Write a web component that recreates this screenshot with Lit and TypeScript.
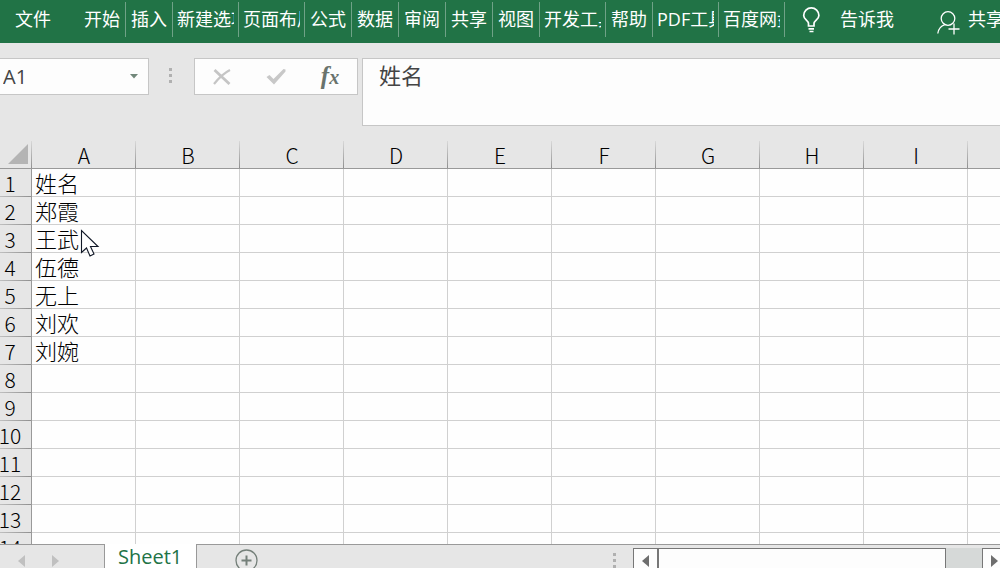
import { LitElement, html, css, svg } from "lit";
import { customElement, property, state } from "lit/decorators.js";
import { classMap } from "lit/directives/class-map.js";

interface RibbonTab {
  label: string;
  wide?: boolean;
}

const TABS: RibbonTab[] = [
  { label: "开始" },
  { label: "插入" },
  { label: "新建选项卡", wide: true },
  { label: "页面布局", wide: true },
  { label: "公式" },
  { label: "数据" },
  { label: "审阅" },
  { label: "共享" },
  { label: "视图" },
  { label: "开发工具", wide: true },
  { label: "帮助" },
  { label: "PDF工具集", wide: true },
  { label: "百度网盘", wide: true },
];

const COLUMNS = ["A", "B", "C", "D", "E", "F", "G", "H", "I", "J"];
const NAMES = ["姓名", "郑霞", "王武", "伍德", "无上", "刘欢", "刘婉"];
const ROW_COUNT = 14;

const reset = css`
  :host,
  * {
    box-sizing: border-box;
  }
  button,
  input,
  textarea {
    margin: 0;
    padding: 0;
    border: 0;
    border-radius: 0;
    background: none;
    color: inherit;
    font: inherit;
    outline: none;
  }
  svg {
    display: block;
    flex: none;
  }
`;

@customElement("ribbon-bar")
class RibbonBar extends LitElement {
  static styles = [
    reset,
    css`
      :host {
        display: flex;
        flex: none;
        height: 43px;
        padding: 2px 0 6px;
        overflow: hidden;
        background: #217346;
        color: #fff;
        font-size: 18px;
        line-height: 35px;
      }
      .tabs {
        display: flex;
        flex: none;
        margin-left: 13px;
      }
      .tab {
        width: 47px;
        padding: 0 4px;
        border-right: 1px solid #6fa287;
        white-space: nowrap;
      }
      .tab.wide {
        width: 66px;
        text-align: left;
      }
      .clip {
        display: block;
        overflow: hidden;
      }
      .file {
        flex: none;
        width: 66px;
      }
      .action {
        display: flex;
        flex: none;
        align-items: center;
        white-space: nowrap;
      }
      .tell {
        gap: 18px;
        margin-left: 17px;
      }
      .share {
        gap: 8px;
        margin: 0 -4px 0 auto;
      }
      .person {
        margin-top: 6px;
      }
    `,
  ];

  render() {
    return html`
      <button class="file">文件</button>
      <nav class="tabs">
        ${TABS.map(
          (t) => html`<button class=${classMap({ tab: true, wide: !!t.wide })}>
            <span class="clip">${t.label}</span>
          </button>`
        )}
      </nav>
      <button class="action tell">
        <svg width="20" height="26" viewBox="0 0 20 26" fill="none" stroke="#fff" stroke-width="1.7">
          <path d="M6.500 19v-2.5C6.500 13.500 1.700 12.500 1.700 8.500a7.500 7.500 0 0 1 15.200 0C16.900 12.500 12 13.500 12 16.500V19z" />
          <path d="M6.500 21.800h5.500M7.500 24.500h4" />
        </svg>
        告诉我
      </button>
      <button class="action share">
        <svg class="person" width="23" height="24" viewBox="0 0 23 24" fill="none" stroke="#fff" stroke-width="1.300">
          <circle cx="11" cy="7.500" r="6.800" />
          <path d="M.8 22.500c.6-4.500 3.200-7.500 7-8.800M17 12.500v11M11.500 18h11" />
        </svg>
        共享
      </button>
    `;
  }
}

@customElement("formula-bar")
class FormulaBar extends LitElement {
  @property() cell = "";
  @property() value = "";

  static styles = [
    reset,
    css`
      :host {
        display: flex;
        flex: none;
        align-items: flex-start;
        padding: 15px 0;
        color: #444;
        font-size: 20px;
      }
      .box {
        display: flex;
        flex: none;
        align-items: center;
        height: 37px;
        border: 1px solid #c6c6c6;
        background: #fdfdfd;
      }
      .name {
        width: 149px;
        padding: 0 10px 0 3px;
        border-left: 0;
      }
      .name input {
        flex: 1;
        min-width: 0;
      }
      .grip {
        margin: 10px 21px 0 20px;
      }
      .tools {
        width: 164px;
        margin-right: 4px;
      }
      .tools button {
        display: flex;
        flex: 1;
        align-items: center;
        justify-content: center;
        height: 35px;
      }
      .fx {
        color: #69736d;
        font: italic bold 25px/32px "Liberation Serif", serif;
      }
      .sub {
        font-size: 20px;
      }
      .value {
        flex: 1;
        min-width: 0;
        height: 68px;
        padding: 0 16px;
        border: 1px solid #c6c6c6;
        border-right: 0;
        background: #fdfdfd;
        font-size: 22px;
        line-height: 32px;
        resize: none;
      }
    `,
  ];

  render() {
    return html`
      <div class="box name">
        <input aria-label="名称框" .value=${this.cell} />
        <button aria-label="名称列表">
          <svg width="8" height="5" viewBox="0 0 8 5"><path d="M0 0h8L4 4.500z" fill="#71877a" /></svg>
        </button>
      </div>
      <svg class="grip" width="4" height="16" viewBox="0 0 4 16">
        <path d="M0 0h3v3H0zM0 6h3v3H0zM0 12h3v3H0z" fill="#b0b0b0" />
      </svg>
      <div class="box tools">
        <button aria-label="取消">
          <svg width="18" height="16" viewBox="0 0 18 16" fill="none" stroke="#c5c5c5">
            <path d="M1.500 1 16.500 15" stroke-width="2.800" />
            <path d="M17 1C11 4 5 10 1 15" stroke-width="2.200" />
          </svg>
        </button>
        <button aria-label="输入">
          <svg width="20" height="17" viewBox="0 0 20 17">
            <path d="M.5 9 3.500 7l4 4L17.500 1l2 .5v2L8 16.500z" fill="#c8c8c8" />
          </svg>
        </button>
        <button aria-label="插入函数"><span class="fx">f<span class="sub">x</span></span></button>
      </div>
      <textarea class="value" aria-label="编辑栏" .value=${this.value}></textarea>
    `;
  }
}

@customElement("sheet-grid")
class SheetGrid extends LitElement {
  static styles = [
    reset,
    css`
      :host {
        display: block;
        position: relative;
        flex: 1;
        min-height: 0;
        overflow: hidden;
        background: linear-gradient(#e6e6e6 28px, #fff 28px);
        color: #000;
        font-family: "Noto Sans CJK SC", sans-serif;
        font-size: 22px;
        font-weight: 300;
        line-height: 27px;
      }
      table {
        width: 1083px;
        margin-left: -11px;
        border-collapse: separate;
        border-spacing: 0;
        table-layout: fixed;
      }
      .index {
        width: 43px;
      }
      th,
      td {
        height: 28px;
        padding: 0;
        font-weight: inherit;
        white-space: nowrap;
      }
      th {
        font-size: 21px;
      }
      td {
        padding-left: 3px;
        border-right: 1px solid #d0d0d0;
        border-bottom: 1px solid #d0d0d0;
        background: #fefefe;
      }
      .head {
        padding-top: 2px;
        border-bottom: 1px solid #999;
        background: linear-gradient(#d8d8d8, #909090) right / 1px 100% no-repeat #e6e6e6;
        line-height: 25px;
      }
      .row {
        border-right: 1px solid #999;
        background: linear-gradient(90deg, #d0d0d0, #909090) bottom / 100% 1px no-repeat #e6e6e6;
        line-height: 28px;
      }
      .corner {
        padding: 0 4px 2px 0;
      }
      .corner svg {
        margin-left: auto;
      }
      .cursor {
        position: absolute;
        left: 80px;
        top: 88px;
      }
    `,
  ];

  render() {
    const rows = Array.from({ length: ROW_COUNT }, (_, i) => i);
    return html`
      <table>
        <colgroup>
          <col class="index" />
          ${COLUMNS.map(() => html`<col />`)}
        </colgroup>
        <thead>
          <tr>
            <th class="head corner" aria-label="全选">
              <svg width="21" height="20" viewBox="0 0 21 20"><path d="M21 0v20H1z" fill="#b4b4b4" /></svg>
            </th>
            ${COLUMNS.map((c) => html`<th class="head" scope="col">${c}</th>`)}
          </tr>
        </thead>
        <tbody>
          ${rows.map(
            (r) => html`<tr>
              <th class="row" scope="row">${r + 1}</th>
              ${COLUMNS.map((_, c) => html`<td>${c === 0 ? NAMES[r] ?? "" : ""}</td>`)}
            </tr>`
          )}
        </tbody>
      </table>
      <svg class="cursor" width="20" height="30" viewBox="0 0 20 30">
        <path d="M1.500 1.500v22l5-4.500 3.500 8 4-2-3.500-7.500H18z" fill="#fff" stroke="#111827" stroke-width="1.100" />
      </svg>
    `;
  }
}

const arrow = (left: boolean) =>
  svg`<path d=${left ? "M7 0v12L0 6z" : "M0 0v12l7-6z"} fill="currentColor" />`;

@customElement("sheet-footer")
class SheetFooter extends LitElement {
  @state() private sheets = ["Sheet1"];

  static styles = [
    reset,
    css`
      :host {
        display: flex;
        flex: none;
        height: 24px;
        overflow: hidden;
        background: linear-gradient(#999 1px, #e6e6e6 1px);
      }
      .steps {
        display: flex;
        flex: none;
        align-items: center;
        gap: 27px;
        width: 105px;
        height: 33px;
        padding-left: 18px;
        border-right: 1px solid #999;
        color: #c0c0c0;
      }
      .tab {
        flex: none;
        height: 24px;
        padding: 2px 14px 0 13px;
        border-right: 1px solid #999;
        background: #fff;
        color: #217346;
        font-size: 20px;
        line-height: 22px;
      }
      .add {
        height: 33px;
        margin-left: 38px;
      }
      .grip {
        margin: 9px 17px 0 auto;
      }
      .scroll {
        display: flex;
        flex: none;
        width: 367px;
        height: 30px;
        margin-top: 4px;
        background: #d6d9d8;
        color: #6e6e6e;
      }
      .end {
        flex: none;
        width: 25px;
        padding-left: 8px;
        border: 1px solid #777;
        background: #fdfdfd;
      }
      .end svg {
        margin-bottom: 4px;
      }
      .thumb {
        flex: 1;
        margin-right: 36px;
        border: 1px solid #777;
        background: #fdfdfd;
      }
      .last {
        margin-right: -7px;
      }
    `,
  ];

  render() {
    return html`
      <div class="steps">
        <button aria-label="上一张">
          <svg width="7" height="12" viewBox="0 0 7 12">${arrow(true)}</svg>
        </button>
        <button aria-label="下一张">
          <svg width="7" height="12" viewBox="0 0 7 12">${arrow(false)}</svg>
        </button>
      </div>
      ${this.sheets.map((s) => html`<button class="tab">${s}</button>`)}
      <button class="add" aria-label="新工作表">
        <svg width="23" height="23" viewBox="0 0 23 23" fill="none" stroke="#75807a">
          <circle cx="11.500" cy="11.500" r="10.500" stroke-width="1.300" />
          <path d="M11.500 6.500v10M6.500 11.500h10" stroke-width="2" />
        </svg>
      </button>
      <svg class="grip" width="3" height="16" viewBox="0 0 3 16">
        <path d="M0 0h3v3H0zM0 6h3v3H0zM0 12h3v3H0z" fill="#b0b0b0" />
      </svg>
      <div class="scroll">
        <button class="end" aria-label="向左滚动">
          <svg width="7" height="12" viewBox="0 0 7 12">${arrow(true)}</svg>
        </button>
        <div class="thumb"></div>
        <button class="end last" aria-label="向右滚动">
          <svg width="7" height="12" viewBox="0 0 7 12">${arrow(false)}</svg>
        </button>
      </div>
    `;
  }
}

@customElement("app-root")
class AppRoot extends LitElement {
  static styles = css`
    :host {
      display: flex;
      flex-direction: column;
      height: 100vh;
      overflow: hidden;
      background: #e6e6e6;
      font-family: "Open Sans", "Noto Sans CJK SC", sans-serif;
    }
  `;

  render() {
    return html`
      <ribbon-bar></ribbon-bar>
      <formula-bar cell="A1" value="姓名"></formula-bar>
      <sheet-grid></sheet-grid>
      <sheet-footer></sheet-footer>
    `;
  }
}
